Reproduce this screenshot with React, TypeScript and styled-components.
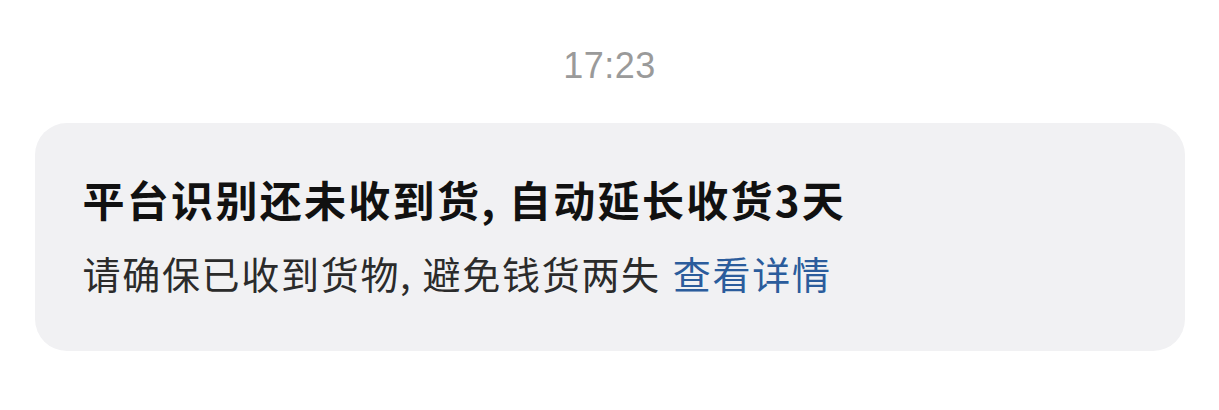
import React from "react";
import styled, { createGlobalStyle } from "styled-components";

const GlobalStyle = createGlobalStyle`
  html, body {
    margin: 0;
    padding: 0;
    background: #ffffff;
  }
  body {
    font-family: "Noto Sans CJK SC", "Noto Sans", sans-serif;
  }
`;

const Page = styled.div`
  display: flex;
  flex-direction: column;
  align-items: center;
  width: 1219px;
  padding-top: 42px;
  box-sizing: border-box;
`;

const Time = styled.div`
  font-family: "Liberation Sans", "Noto Sans", sans-serif;
  font-size: 36px;
  line-height: 48px;
  color: #9a9a9a;
  letter-spacing: 0.5px;
`;

const Card = styled.div`
  display: flex;
  flex-direction: column;
  gap: 18px;
  margin-top: 33px;
  width: 1150px;
  box-sizing: border-box;
  padding: 48px 48px 50px;
  background: #f1f1f3;
  border-radius: 32px;
`;

const Title = styled.div`
  font-size: 42px;
  font-weight: 700;
  line-height: 56px;
  color: #111111;
  letter-spacing: 2.3px;
`;

const Body = styled.div`
  font-size: 38px;
  font-weight: 400;
  line-height: 56px;
  color: #2b2b2b;
  letter-spacing: 1.7px;
`;

const Link = styled.span<{ tone?: string }>`
  color: ${({ tone }) => tone || "#2b5c9c"};
  margin-left: 12px;
`;

export default function App() {
  return (
    <>
      <GlobalStyle />
      <Page>
        <Time>17:23</Time>
        <Card>
          <Title>平台识别还未收到货, 自动延长收货3天</Title>
          <Body>
            请确保已收到货物, 避免钱货两失
            <Link>查看详情</Link>
          </Body>
        </Card>
      </Page>
    </>
  );
}
